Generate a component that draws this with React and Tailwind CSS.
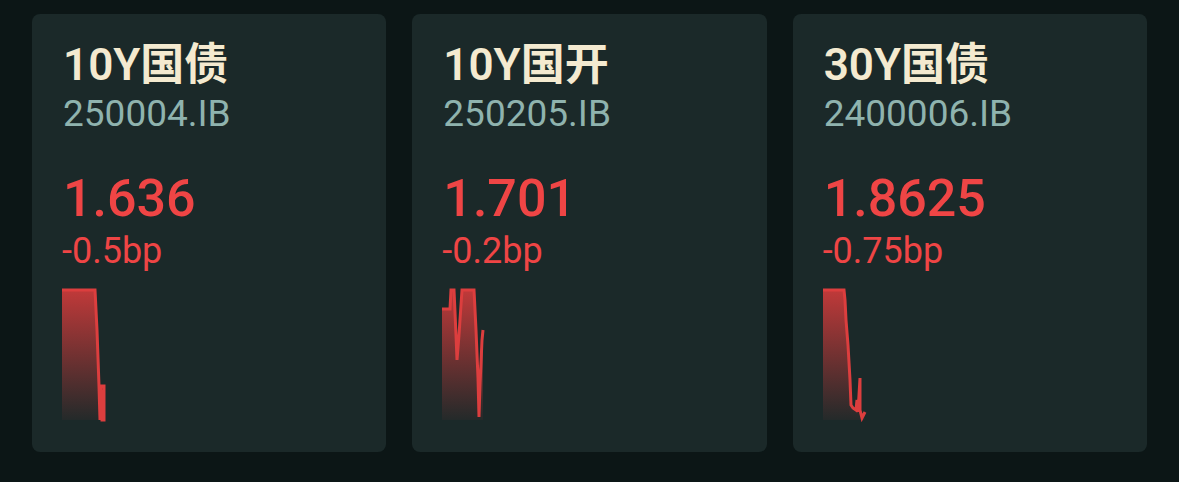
import React from 'react'

// three bond quote cards: name, code, yield, change in bp, tiny intraday sparkline
const BONDS = [
  {
    name: '10Y国债',
    code: '250004.IB',
    yld: '1.636',
    chg: '-0.5bp',
    line: [[0, 0], [33, 0], [35, 40], [37, 96], [38, 130], [39, 96], [42, 96], [42, 130], [40, 130], [40, 100]],
  },
  {
    name: '10Y国开',
    code: '250205.IB',
    yld: '1.701',
    chg: '-0.2bp',
    line: [[0, 19], [8, 19], [9, 0], [12, 0], [14, 45], [15, 70], [17, 45], [20, 0], [32, 0], [34, 40], [36, 88], [37, 127], [38, 95], [40, 50], [41, 40]],
  },
  {
    name: '30Y国债',
    code: '2400006.IB',
    yld: '1.8625',
    chg: '-0.75bp',
    line: [[0, 0], [21, 0], [22, 10], [23, 30], [25, 55], [27, 90], [28, 115], [30, 118], [33, 120], [34, 110], [35, 122], [37, 88], [37, 120], [39, 128], [42, 122]],
  },
]

const H = 130

function Spark({pts, id}) {
  const line = pts.map((p, i) => (i ? 'L' : 'M') + p[0] + ',' + p[1]).join(' ')
  const last = pts[pts.length - 1]
  const area = line + ` L${last[0]},${H} L0,${H} Z`
  return (
    <svg width="80" height={H} viewBox={`0 0 80 ${H}`} className="block -ml-[2px] overflow-visible">
      <defs>
        <linearGradient id={id} x1="0" y1="0" x2="0" y2="1">
          <stop offset="0%" stopColor="#c93a3a" stopOpacity="0.95" />
          <stop offset="100%" stopColor="#c93a3a" stopOpacity="0.05" />
        </linearGradient>
      </defs>
      <path d={area} fill={`url(#${id})`} />
      <path d={line} fill="none" stroke="#dc3e3e" strokeWidth="3" strokeLinejoin="miter" />
    </svg>
  )
}

function BondCard({b, i}) {
  return (
    <div className="h-[438px] rounded-lg bg-[#1b2929] pl-[32px] pt-[26px]">
      <div className="-ml-[1px] text-[44px] leading-[50px] font-semibold text-[#f4ead0]">{b.name}</div>
      <div className="-ml-[1px] mt-[2px] text-[37px] leading-[44px] text-[#8fb3ae]">{b.code}</div>
      <div className="-ml-[1px] mt-[33px] text-[52px] leading-[60px] font-medium text-[#ef4545]">{b.yld}</div>
      <div className="mt-[2px] -ml-[2px] text-[36px] leading-[40px] text-[#ef4545]">{b.chg}</div>
      <div className="mt-[19px]">
        <Spark pts={b.line} id={'g' + i} />
      </div>
    </div>
  )
}

export default function App() {
  return (
    <div
      className="w-[1179px] h-[482px] bg-[#0c1616] px-[32px] pt-[14px] grid grid-cols-3 gap-[26px] items-start"
      style={{fontFamily: 'Roboto, "Noto Sans CJK SC", sans-serif'}}
    >
      {BONDS.map((b, i) => (
        <BondCard key={b.code} b={b} i={i} />
      ))}
    </div>
  )
}
